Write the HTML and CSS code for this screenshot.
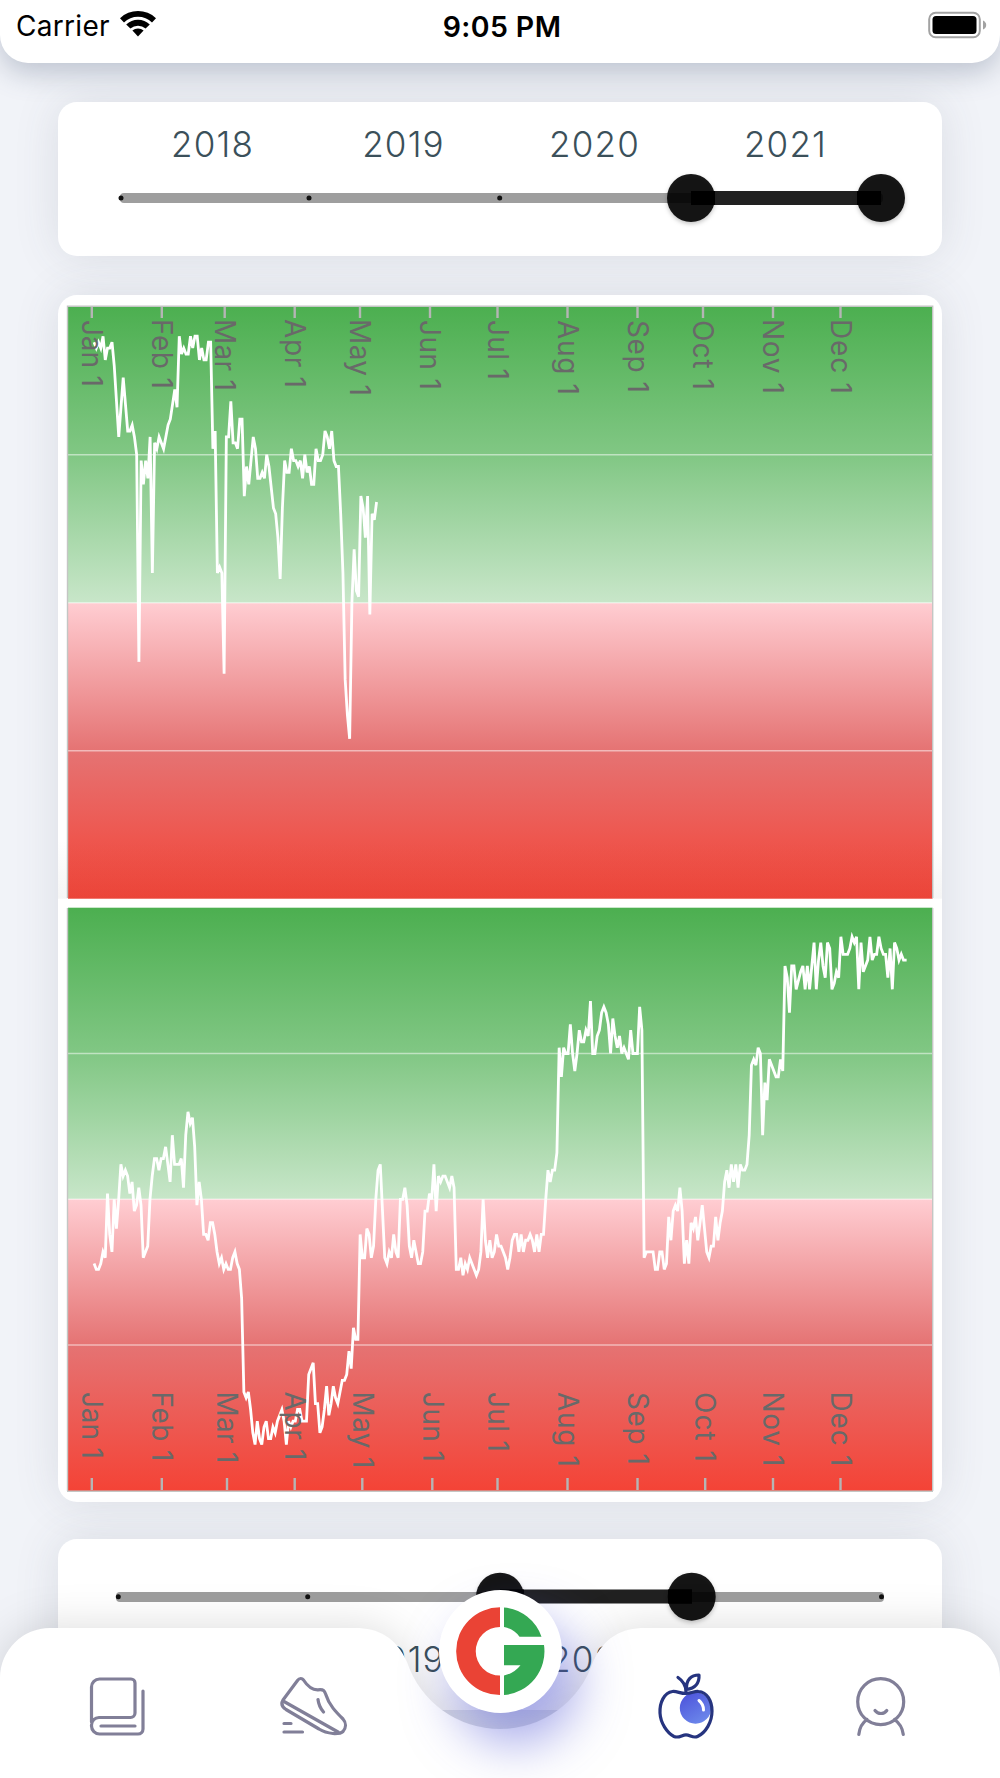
FILE: index.html
```html
<!DOCTYPE html>
<html lang="en">
<head>
<meta charset="utf-8">
<title>Yearly trends</title>
<link rel="stylesheet" href="styles.css">
</head>
<body>
<div class="screen">
  <header class="status">
    <div class="carrier">
      <span class="carrier-name">Carrier</span>
      <svg class="wifi" width="38" height="28" viewBox="0 0 38 28">
        <path d="M1 8.2A26 26 0 0 1 37 8.2L33 12.4A20.2 20.2 0 0 0 5 12.4Z"/>
        <path d="M7.2 14.4A17.2 17.2 0 0 1 30.8 14.4L26.6 18.6A11.2 11.2 0 0 0 11.4 18.6Z"/>
        <path d="M13.4 20.6A8.3 8.3 0 0 1 24.6 20.6L19 26.6Z"/>
      </svg>
    </div>
    <div class="time">9:05 PM</div>
    <svg class="battery" width="60" height="28" viewBox="0 0 60 28">
      <rect x="1.2" y="1.7" width="50.6" height="24.6" rx="6.5" fill="none" stroke="#a2a2a2" stroke-width="2"/>
      <rect x="4.5" y="5" width="44" height="18" rx="3.5"/>
      <path d="M55 9.5Q58.2 11 58.2 14T55 18.5Z" fill="#a2a2a2"/>
    </svg>
  </header>

  <main class="content">
    <section class="card range range-top">
      <div class="years"><span>2018</span><span>2019</span><span>2020</span><span>2021</span></div>
      <svg class="slider" width="884" height="60" viewBox="58 168 884 60">
        <rect x="120" y="193" width="763" height="10" rx="4" fill="#9e9e9e"/>
        <g class="dots"><circle cx="121" cy="198" r="2.5"/><circle cx="309" cy="198" r="2.5"/><circle cx="499.7" cy="198" r="2.5"/></g>
        <rect x="691" y="191" width="190" height="14" fill="#212121"/>
        <g class="thumbs"><circle cx="691" cy="198" r="24"/><circle cx="881" cy="198" r="24"/></g>
        <path d="M691 191h24v14h-24zM857 191h24v14h-24z"/>
      </svg>
    </section>

    <section class="card charts">
      <svg class="plots" width="884" height="1207" viewBox="58 295 884 1207">
        <defs>
          <linearGradient id="zones" x1="0" y1="0" x2="0" y2="1">
            <stop offset="0" stop-color="#4caf50"/>
            <stop offset=".25" stop-color="#81c784"/>
            <stop offset=".5" stop-color="#c8e6c9"/>
            <stop offset=".5" stop-color="#ffcdd2"/>
            <stop offset=".75" stop-color="#e57373"/>
            <stop offset="1" stop-color="#f44336"/>
          </linearGradient>
          <linearGradient id="fold" x1="0" y1="0" x2="0" y2="1">
            <stop offset="0" stop-color="#606060" stop-opacity="0"/>
            <stop offset="1" stop-color="#606060" stop-opacity=".06"/>
          </linearGradient>
        </defs>

        <rect x="68" y="306.7" width="864.5" height="592" fill="url(#zones)"/>
        <path class="grid" d="M68 454.7H932.5M68 602.7H932.5M68 750.7H932.5"/>
        <path class="frame" d="M67.5 898V306.3H932.7V898"/>
        <path class="ticks" d="M91.8 307v11M161.8 307v11M224.7 307v11M294.7 307v11M360 307v11M430 307v11M497.5 307v11M567.5 307v11M637.5 307v11M703 307v11M773 307v11M840.5 307v11"/>
        <polyline class="series" transform="translate(91.83 306.67) scale(2.242 5.92)" points="1,6 2,7 3,6 4,7 5,5 6,9 7,7 8,7 9,6 10,10 12,22 14,12 16,21 17,21 18,20 19,22 20,25 21,60 22,26 23,30 24,26 25,29 26,22 27,45 28,23 29,24 30,22 32,24 33,22 34,20 35,19 37,14 38,17 39,5 40,8 41,7 42,8 43,8 44,5 45,7 46,5 47,5 48,9 49,7 50,9 51,9 52,6 53,6 54,24 55,21 56,45 57,44 58,45 59,62 60,22 61,22 62,16 63,23 64,23 65,24 66,19 67,19 68,32 69,27 70,30 72,22 73,24 74,29 75,29 76,28 77,29 78,25 79,27 81,34 82,35 83,39 84,46 85,34 86,26 87,28 88,28 89,24 90,26 91,26 92,27 93,26 94,29 95,25 96,28 97,27 98,30 99,30 100,24 101,26 102,26 103,25 104,21 105,22 106,24 107,21 108,26 109,27 110,27 111,35 112,45 113,63 114,69 115,73 116,50 117,41 118,48 119,49 120,32 121,34 122,39 123,32 124,52 125,35 126,36 127,33"/>
        <g class="months">
          <text transform="translate(82 320) rotate(90)" textLength="67">Jan 1</text>
          <text transform="translate(152 319) rotate(90)" textLength="70">Feb 1</text>
          <text transform="translate(215 319) rotate(90)" textLength="72">Mar 1</text>
          <text transform="translate(285 319) rotate(90)" textLength="69">Apr 1</text>
          <text transform="translate(350 319) rotate(90)" textLength="77">May 1</text>
          <text transform="translate(420 320) rotate(90)" textLength="70">Jun 1</text>
          <text transform="translate(487.5 320) rotate(90)" textLength="60">Jul 1</text>
          <text transform="translate(557.5 320) rotate(90)" textLength="75">Aug 1</text>
          <text transform="translate(627.5 320) rotate(90)" textLength="73">Sep 1</text>
          <text transform="translate(692.5 320) rotate(90)" textLength="70">Oct 1</text>
          <text transform="translate(762.5 319) rotate(90)" textLength="75">Nov 1</text>
          <text transform="translate(830.5 319) rotate(90)" textLength="75">Dec 1</text>
        </g>
        <rect x="58" y="840" width="884" height="58.7" fill="url(#fold)"/>

        <rect x="68" y="907.7" width="864.5" height="583.3" fill="url(#zones)"/>
        <path class="grid" d="M68 1053.5H932.5M68 1199.3H932.5M68 1345H932.5"/>
        <path class="frame" d="M67.5 1491V908M932.7 908V1491"/>
        <path class="frame" d="M67 1491.3H933"/>
        <path class="ticks" d="M91.8 1478v12M161.8 1478v12M227 1478v12M294.7 1478v12M362.3 1478v12M432.3 1478v12M497.5 1478v12M567.5 1478v12M637.5 1478v12M705.2 1478v12M773 1478v12M840.5 1478v12"/>
        <polyline class="series" transform="translate(91.83 907.6) scale(2.236 5.836)" points="1,61 2,62 3,62 4,61 5,59 6,60 7,49 8,56 9,59 10,50 11,55 12,50 13,44 14,46 15,45 16,46 17,49 18,47 19,52 20,51 21,48 22,51 23,60 25,58 26,50 27,46 28,43 29,43 30,45 31,43 32,43 33,41 34,44 35,47 36,39 37,44 39,44 40,43 41,48 42,39 43,35 44,37 45,36 46,41 47,51 48,47 49,50 50,56 51,56 52,57 53,54 54,54 55,56 56,59 57,61 58,60 59,62 60,61 61,62 62,62 63,60 64,59 65,61 66,62 67,67 68,83 69,84 70,83 71,86 72,90 73,92 74,88 75,91 76,92 77,89 78,88 79,91 80,91 81,89 82,90 83,88 85,86 86,88 87,92 88,88 89,89 90,88 91,88 92,86 93,86 94,88 96,88 97,80 99,78 100,85 101,85 102,90 103,89 104,86 105,82 106,87 107,85 108,82 109,84 110,85 112,81 113,81 114,80 115,76 116,79 117,72 118,74 119,74 120,56 121,60 122,60 123,55 124,56 125,60 126,58 127,50 128,45 129,44 130,52 131,60 132,61 133,59 134,60 135,56 136,59 137,60 138,50 139,50 140,48 141,51 142,58 143,60 144,57 145,59 146,61 147,61 148,59 149,52 150,52 151,49 152,50 153,44 154,52 155,46 156,47 157,46 158,46 160,48 161,46 162,48 163,62 164,62 165,60 166,63 167,61 168,62 169,60 172,63 173,62 174,59 175,50 176,57 177,60 178,57 179,60 180,59 181,56 182,58 183,58 185,60 186,62 187,60 188,57 189,56 190,56 191,59 192,56 193,59 194,57 195,57 196,56 197,57 198,59 199,56 200,59 201,56 202,56 203,50 204,45 205,47 206,45 207,45 208,42 209,24 210,29 211,24 212,25 213,25 214,20 215,25 216,28 217,25 218,21 219,23 220,23 221,21 222,22 223,16 224,25 225,25 226,22 227,21 228,18 229,17 230,18 231,20 232,25 233,19 234,22 235,24 236,22 237,25 238,24 239,25 240,26 241,21 242,25 244,25 245,17 246,21 247,60 248,59 251,59 252,62 253,62 254,59 255,59 256,62 257,61 258,53 259,57 260,52 261,51 262,52 263,48 264,52 265,61 266,57 267,61 268,54 269,55 270,53 271,57 273,51 274,55 275,59 276,60 277,58 278,58 279,53 280,57 281,54 282,52 283,47 284,45 285,48 286,44 287,47 288,44 289,48 290,44 291,45 292,45 293,44 294,39 295,27 296,26 297,27 298,24 299,25 300,39 301,30 302,33 303,26 306,29 307,29 308,26 309,28 310,10 311,12 312,18 313,10 314,10 315,14 317,11 318,10 319,14 320,10 321,14 322,10 323,6 324,14 325,9 326,6 327,10 328,12 329,6 330,7 331,14 332,13 333,11 334,12 335,5 336,8 338,8 339,7 340,5 341,6 342,5 343,14 344,6 345,11 347,9 348,5 349,9 350,8 351,8 352,5 353,7 354,8 355,8 356,12 357,7 358,14 359,6 360,7 361,9 362,8 363,9 364.4,9"/>
        <g class="months">
          <text transform="translate(82 1392) rotate(90)" textLength="67">Jan 1</text>
          <text transform="translate(152 1391.500) rotate(90)" textLength="70">Feb 1</text>
          <text transform="translate(217 1391.500) rotate(90)" textLength="72">Mar 1</text>
          <text transform="translate(285 1391.500) rotate(90)" textLength="69">Apr 1</text>
          <text transform="translate(352.5 1391.500) rotate(90)" textLength="77">May 1</text>
          <text transform="translate(422.5 1392) rotate(90)" textLength="70">Jun 1</text>
          <text transform="translate(487.5 1392) rotate(90)" textLength="60">Jul 1</text>
          <text transform="translate(557.5 1392) rotate(90)" textLength="75">Aug 1</text>
          <text transform="translate(627.5 1392) rotate(90)" textLength="73">Sep 1</text>
          <text transform="translate(695 1392) rotate(90)" textLength="70">Oct 1</text>
          <text transform="translate(762.5 1391.500) rotate(90)" textLength="75">Nov 1</text>
          <text transform="translate(830.5 1391.500) rotate(90)" textLength="75">Dec 1</text>
        </g>
      </svg>
    </section>

    <section class="card range range-bottom">
      <svg class="slider" width="884" height="60" viewBox="58 1567 884 60">
        <rect x="116" y="1592" width="768" height="10" rx="4" fill="#9e9e9e"/>
        <g class="dots"><circle cx="118.3" cy="1596.7" r="2.5"/><circle cx="307.7" cy="1596.7" r="2.5"/><circle cx="881.5" cy="1596.7" r="2.5"/></g>
        <rect x="500" y="1589.5" width="192" height="14" fill="#212121"/>
        <g class="thumbs"><circle cx="500" cy="1596.7" r="24"/><circle cx="691.7" cy="1596.7" r="24"/></g>
        <path d="M668 1589.5h24v14h-24zM500 1589.5h24v14h-24z"/>
      </svg>
      <div class="years"><span>2018</span><span>2019</span><span>2020</span><span>2021</span></div>
    </section>
  </main>

  <nav class="tabbar">
    <svg class="tabbar-shape" width="1000" height="150" viewBox="0 0 1000 150">
      <path d="M0 150V50A50 50 0 0 1 50 0H355C378 0 396 9 407 34A98 98 0 0 0 593 34C604 9 622 0 645 0H950A50 50 0 0 1 1000 50V150Z" fill="#fff"/>
    </svg>
    <div class="tabs">
      <div class="tab-group">
        <svg class="tab" width="58" height="60" viewBox="88 1676 58 60">
          <path d="M91.5 1722V1687a8 8 0 0 1 8-8H131a4 4 0 0 1 4 4V1713a4.500 4.500 0 0 1-4.500 4.500H99a7.500 7.500 0 0 0-7.500 7.500v1a8 8 0 0 0 8 8H138a5 5 0 0 0 5-5V1691M101 1726H135"/>
        </svg>
        <svg class="tab" width="70" height="62" viewBox="279 1674 70 62">
          <path d="M283 1699L297.500 1679.500C299.500 1676.800 302 1677 303.500 1679C308 1686 313 1689 318 1688.800C324 1688 324.500 1690 326 1694C329 1704 336 1711 343 1718C346.500 1722 346 1727 343 1730.500C341 1732.500 338 1732.700 333 1732.500C328 1732 323 1730.500 319 1728L286 1708.500C282 1706 281 1702.500 283 1699ZM284 1700.500L338 1731M318 1698.500C318.500 1703 320.500 1707.500 323.500 1711M284 1722.500H291M284 1731H302.500"/>
        </svg>
      </div>
      <div class="tab-group">
        <svg class="tab" width="62" height="70" viewBox="655 1670 62 70">
          <defs><linearGradient id="berry" x1="0" y1="0" x2=".6" y2="1"><stop offset="0" stop-color="#4a4fda"/><stop offset="1" stop-color="#6b86ea"/></linearGradient></defs>
          <circle cx="695.500" cy="1707" r="15.700" fill="url(#berry)" stroke="none"/>
          <path stroke="#fff" stroke-width="3" d="M699 1699.500C702 1702 703.500 1705 703.500 1709"/>
          <path class="apple" d="M686 1692.500C680 1692.500 677 1690 672.500 1690.500C664 1691.500 659.500 1702 660 1712C660.500 1722 667 1732 674 1735.500C679 1737.500 682 1733.800 686 1733.800C690 1733.800 693 1737.500 697.500 1735.500C706 1731.500 712 1721 712 1710C712 1700 707 1691 698.500 1690.500C694 1690 692 1692.500 686 1692.500ZM686 1691C686 1684.500 682.500 1679.500 678 1676.500M686.500 1688.500C686 1679 691 1674 699 1674C699.500 1682 695 1687.500 686.500 1688.500Z"/>
        </svg>
        <svg class="tab" width="52" height="62" viewBox="855 1675 52 62">
          <path d="M903.700 1701.700a23 23 0 1 1-46 0a23 23 0 1 1 46 0ZM867 1719.500C862 1723 859.500 1728 858.800 1734.500M894.500 1719.500C899.500 1723 902.500 1728 903.300 1734.500M875 1710.500C878 1714.500 884 1714.500 886.800 1710.500"/>
        </svg>
      </div>
    </div>
    <div class="fab">
      <svg width="90" height="90" viewBox="455 1606 90 90">
        <path d="M500 1607.300A43.800 43.800 0 0 0 500 1695V1675.500A24.200 24.200 0 0 1 500 1627Z" fill="#ea4335"/>
        <path d="M504 1607.500A43.800 43.800 0 0 1 541.500 1636.800H519.500Q514 1629 504 1627ZM504 1645H544A43.800 43.800 0 0 1 504 1695V1675.500Q514 1673.500 520.500 1665.300H504Z" fill="#34a853"/>
      </svg>
    </div>
  </nav>
</div>
</body>
</html>
```
FILE: styles.css
```css
* { box-sizing: border-box; }

body {
  margin: 0;
  background: #f1f3f8;
  font-family: Inter, "Liberation Sans", sans-serif;
}

.screen {
  width: 1000px;
  height: 1778px;
  overflow: hidden;
  position: relative;
}

svg { display: block; }

.status {
  height: 63px;
  padding: 1px 12px 12px 16px;
  display: grid;
  grid-template-columns: 1fr auto 1fr;
  align-items: center;
  background: #fff;
  border-radius: 0 0 28px 28px;
  box-shadow: 0 10px 28px rgba(80, 95, 125, .32);
  position: relative;
  z-index: 1;
  color: #000;
}

.carrier { display: flex; align-items: center; gap: 9px; }
.carrier-name { font-size: 28px; letter-spacing: .3px; }
.wifi { margin-top: -4px; }
.time { font-size: 28.500px; font-weight: 600; letter-spacing: .4px; }
.battery { justify-self: end; margin-top: -2px; }

.content {
  padding: 39px 58px 0;
  display: flex;
  flex-direction: column;
}

.card {
  flex: none;
  background: #fff;
  border-radius: 19px;
  box-shadow: 0 0 45px rgba(70, 76, 95, .13);
}

.range-top { height: 154px; padding-top: 21px; }
.range-top .slider { margin-top: 3px; }
.range-bottom { height: 171px; padding-top: 28px; }

.years {
  display: grid;
  grid-template-columns: repeat(4, 191px);
  padding-left: 59px;
  font-size: 35px;
  font-weight: 350;
  letter-spacing: 1.2px;
  line-height: 42px;
  text-align: center;
  color: #3b505a;
}

.range-bottom .years { margin-top: 11px; }

.dots { fill: #111; }
.thumbs { fill: rgba(0, 0, 0, .9); filter: drop-shadow(0 2px 2px rgba(0, 0, 0, .25)); }

.charts { margin: 39px 0 37px; overflow: hidden; }

.grid { stroke: rgba(255, 255, 255, .5); stroke-width: 1.4; fill: none; }
.frame { stroke: #c4c6c4; stroke-width: 1.4; fill: none; }
.ticks { stroke: #b5b5b5; stroke-width: 2.4; }
.series {
  fill: none;
  stroke: #fff;
  stroke-width: 2.8px;
  vector-effect: non-scaling-stroke;
}
.months { font-size: 28px; fill: #696969; }

.tabbar {
  position: absolute;
  left: 0;
  bottom: 0;
  width: 1000px;
  height: 150px;
  z-index: 2;
}

.tabbar-shape {
  position: absolute;
  inset: 0;
  overflow: visible;
  filter: drop-shadow(0 0 22px rgba(0, 0, 0, .14));
}

.fab {
  position: absolute;
  left: 438.500px;
  top: -38.500px;
  width: 123px;
  height: 123px;
  border-radius: 50%;
  background: #fff;
  display: flex;
  align-items: center;
  justify-content: center;
  box-shadow: 15px 30px 50px rgba(78, 84, 214, .5);
}

.tabs {
  position: relative;
  z-index: 1;
  height: 150px;
  display: flex;
  align-items: center;
  justify-content: space-between;
  padding: 5px 93px 0 88px;
}

.tab-group { display: flex; align-items: center; gap: 133px; }
.tab-group:last-child { gap: 138px; }

.tab {
  fill: none;
  stroke: #817f98;
  stroke-width: 3.2;
  stroke-linecap: round;
  stroke-linejoin: round;
}

.apple { stroke: #26347f; stroke-width: 3.2; }
```
